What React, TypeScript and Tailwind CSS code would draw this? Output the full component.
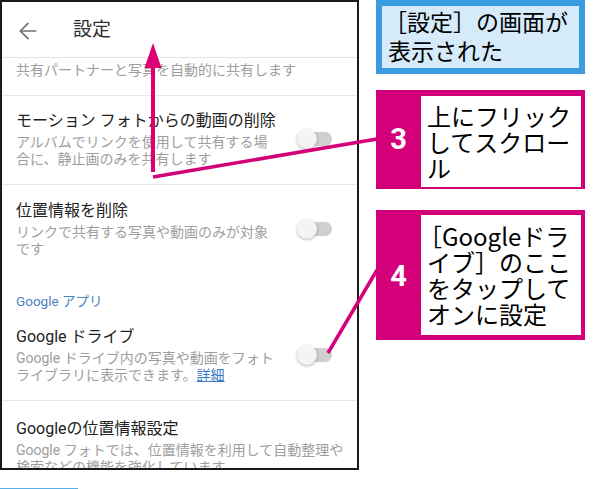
import { ArrowLeft } from "lucide-react";

const ui = { fontFamily: "Roboto, 'Noto Sans CJK JP', sans-serif" };
const jp = { fontFamily: "'Noto Sans CJK JP', sans-serif" };

function Toggle() {
  return (
    <div className="relative mr-[25px] h-[14px] w-[34px] shrink-0 rounded-full bg-[#cfcfcf]">
      <div className="absolute -left-px top-1/2 h-5 w-5 -translate-y-1/2 rounded-full bg-[#f4f4f4] shadow-[0_1px_3px_rgba(0,0,0,0.3)]" />
    </div>
  );
}

function SettingRow({
  title,
  lines,
  toggle = true,
  className = "",
}: {
  title: string;
  lines: React.ReactNode[];
  toggle?: boolean;
  className?: string;
}) {
  return (
    <div className={`flex items-center justify-between pl-[14px] ${className}`}>
      <div className="whitespace-nowrap">
        <div className="text-[16px] leading-[20px] text-[#222]">{title}</div>
        <div className="mt-[3px] text-[14px] leading-[16.5px] text-[#9e9e9e]">
          {lines.map((l, i) => (
            <div key={i}>{l}</div>
          ))}
        </div>
      </div>
      {toggle && <Toggle />}
    </div>
  );
}

export default function App() {
  return (
    <div className="relative flex h-[489px] w-[600px] overflow-hidden bg-white">
      {/* phone screenshot */}
      <div className="w-[359px] shrink-0">
        <div className="h-[470px] overflow-hidden border-2 border-[#1a1a1a] bg-white" style={ui}>
          <div className="flex h-[56px] items-center border-b border-[#e4e4e4] pt-[2px]">
            <ArrowLeft size={26} strokeWidth={1.6} className="ml-[13px] text-[#6f6f6f]" />
            <span className="ml-[32px] text-[19px] text-[#2e2e2e]">設定</span>
          </div>

          <div className="border-b border-[#e8e8e8] pb-[16.5px] pl-[14px] pt-[3.5px] text-[14px] leading-[17px] text-[#9e9e9e]">
            共有パートナーと写真を自動的に共有します
          </div>

          <SettingRow
            className="border-b border-[#e8e8e8] pb-[17px] pt-[15px]"
            title="モーション フォトからの動画の削除"
            lines={["アルバムでリンクを使用して共有する場", "合に、静止画のみを共有します"]}
          />

          <SettingRow
            className="pb-[18px] pt-[16px]"
            title="位置情報を削除"
            lines={["リンクで共有する写真や動画のみが対象", "です"]}
          />

          <div className="pl-[14px] pt-[18px] text-[13.5px] leading-[16px] text-[#4a82c4]">Google アプリ</div>

          <SettingRow
            className="border-b border-[#e8e8e8] pb-[17px] pt-[18px]"
            title="Google ドライブ"
            lines={[
              "Google ドライブ内の写真や動画をフォト",
              <>
                ライブラリに表示できます。<span className="text-[#3b78c8] underline">詳細</span>
              </>,
            ]}
          />

          <SettingRow
            className="pt-[18px]"
            toggle={false}
            title="Googleの位置情報設定"
            lines={["Google フォトでは、位置情報を利用して自動整理や", "検索などの機能を強化しています"]}
          />
        </div>
        <div className="mt-[18px] h-[10px] w-[78px] border border-[#5aaee6]" />
      </div>

      {/* callouts */}
      <div className="ml-[17px] w-[209px]" style={jp}>
        <div className="h-[74px] border-[6px] border-[#3a9be0] bg-[#d6ebf9] pl-[6px] pt-[1px] text-[23px] leading-[29px] text-black">
          <span className="-ml-[4px]">［</span>設定］の画面が
          <br />
          表示された
        </div>

        <div className="mt-[16px] flex h-[99px] bg-[#d4007a]">
          <div
            className="flex w-[45px] items-center justify-center text-[29px] font-bold text-white"
            style={{ fontFamily: "Roboto, sans-serif" }}
          >
            3
          </div>
          <div className="mb-[2px] mr-[4px] mt-[6px] flex flex-1 items-center bg-white pl-[6px] text-[24px] leading-[26px] text-black">
            <div>
              上にフリック
              <br />
              してスクロー
              <br />ル
            </div>
          </div>
        </div>

        <div className="mt-[21px] flex h-[130px] bg-[#d4007a]">
          <div
            className="flex w-[45px] items-center justify-center pt-[4px] text-[29px] font-bold text-white"
            style={{ fontFamily: "Roboto, sans-serif" }}
          >
            4
          </div>
          <div className="my-[5px] mr-[4px] flex flex-1 items-center bg-white pl-[6px] text-[24px] leading-[26px] text-black">
            <div>
              <span className="-ml-[9px]">［</span>Googleドラ
              <br />
              イブ］のここ
              <br />
              をタップして
              <br />
              オンに設定
            </div>
          </div>
        </div>
      </div>

      {/* arrows and leader lines */}
      <svg className="pointer-events-none absolute inset-0" width={600} height={489}>
        <line x1={153} y1={172} x2={153} y2={62} stroke="#dc0072" strokeWidth={4} />
        <polygon points="153,43 144.5,68 161.5,68" fill="#dc0072" />
        <line x1={153} y1={177} x2={377} y2={139} stroke="#d4007a" strokeWidth={3.5} />
        <line x1={328} y1={353} x2={377} y2={270} stroke="#d4007a" strokeWidth={3.5} />
      </svg>
    </div>
  );
}
